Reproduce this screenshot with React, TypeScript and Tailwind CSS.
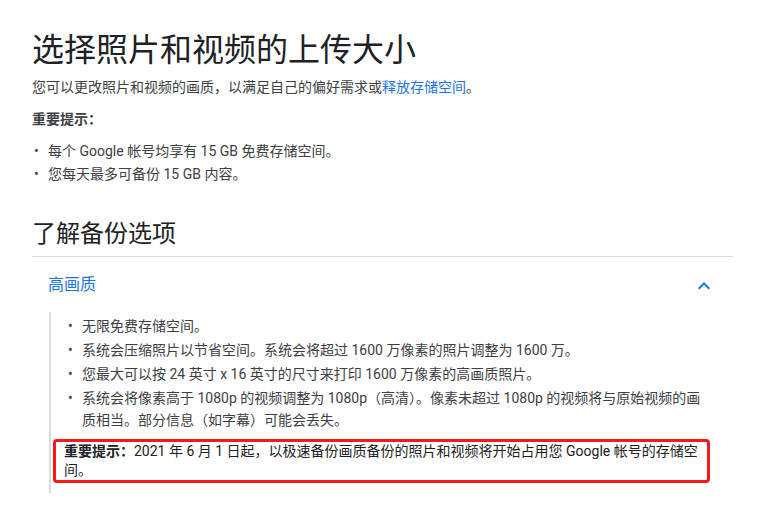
const font = { fontFamily: '"Roboto", "Noto Sans CJK SC", sans-serif' };

const Bullet = ({ children }: { children: React.ReactNode }) => (
    <li className="flex">
        <span className="w-[16px] shrink-0 pl-[2px]">•</span>
        <span>{children}</span>
    </li>
);

const App = () => {
    return (
        <div style={font} className="bg-white w-[765px] h-[510px] px-[32px] text-[#3c4043] text-[14px] overflow-hidden">
            {/* top section */}
            <h1 className="pt-[30px] text-[32px] leading-[40px] text-[#202124]">选择照片和视频的上传大小</h1>
            <p className="mt-[5px] leading-[24px]">
                您可以更改照片和视频的画质，以满足自己的偏好需求或<span className="text-[#1a73e8]">释放存储空间</span>。
            </p>
            <p className="mt-[8px] leading-[24px] font-bold">重要提示：</p>
            <ul className="mt-[9px] leading-[23px]">
                <Bullet>每个 Google 帐号均享有 15 GB 免费存储空间。</Bullet>
                <Bullet>您每天最多可备份 15 GB 内容。</Bullet>
            </ul>

            {/* backup options */}
            <h2 className="mt-[32px] text-[24px] leading-[32px] text-[#202124]">了解备份选项</h2>
            <div className="mt-[6px] border-t border-[#dadce0]">
                <div className="h-[55px] flex items-center justify-between pl-[16px] pr-[17px]">
                    <span className="text-[16px] text-[#1a73e8]">高画质</span>
                    <svg width="24" height="24" viewBox="0 0 24 24" className="mt-[3px]">
                        <path d="M7.41 15.41L12 10.83l4.59 4.58L18 14l-6-6-6 6z" fill="#1a73e8" />
                    </svg>
                </div>
                <div className="ml-[17px] mr-[23px] border-l-2 border-[#dadce0] pl-[2px] pt-[3px] pb-[10px]">
                    <ul className="pl-[13px] leading-[22px] flex flex-col gap-[2px]">
                        <Bullet>无限免费存储空间。</Bullet>
                        <Bullet>系统会压缩照片以节省空间。系统会将超过 1600 万像素的照片调整为 1600 万。</Bullet>
                        <Bullet>您最大可以按 24 英寸 x 16 英寸的尺寸来打印 1600 万像素的高画质照片。</Bullet>
                        <Bullet>系统会将像素高于 1080p 的视频调整为 1080p（高清）。像素未超过 1080p 的视频将与原始视频的画质相当。部分信息（如字幕）可能会丢失。</Bullet>
                    </ul>
                    <div className="mt-[8px] border-[3px] border-[#f51a1a] rounded-[4px] pl-[8px] pr-[8px] leading-[19px] text-[#202124]">
                        <p><span className="font-bold">重要提示：</span>2021 年 6 月 1 日起，以极速备份画质备份的照片和视频将开始占用您 Google 帐号的存储空间。</p>
                    </div>
                </div>
            </div>
        </div>
    );
};

export default App;
